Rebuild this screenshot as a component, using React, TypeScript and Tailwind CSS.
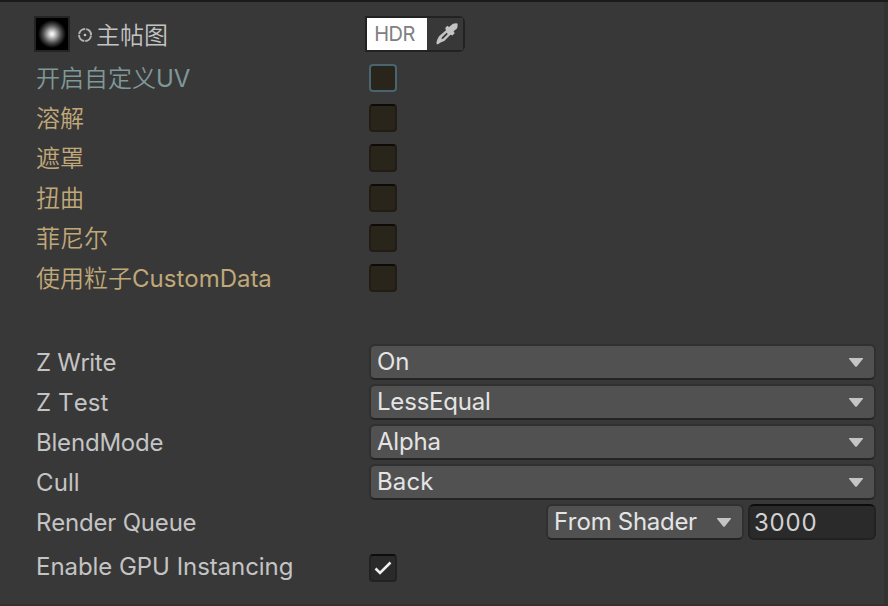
import type { ReactNode } from "react";

type Tone = "plain" | "override" | "gold";

const toneClass: Record<Tone, string> = {
  plain: "text-[#c4c4c4]",
  override: "text-[#7f9999] [font-weight:350]",
  gold: "text-[#c0a878] [font-weight:350]",
};

function Row({ label, tone = "plain", spacing = "", children }: { label: ReactNode; tone?: Tone; spacing?: string; children: ReactNode }) {
  return (
    <div className="flex h-10 items-center">
      <div className={`w-[333px] shrink-0 pt-[2px] ${toneClass[tone]} ${spacing}`}>{label}</div>
      {children}
    </div>
  );
}

function Toggle({ active = false }: { active?: boolean }) {
  return (
    <div
      className={`size-7 rounded-[4px] border-2 bg-[#2a251b] ${
        active ? "border-[#46656e]" : "border-[#211d16] border-t-[#0e0c08]"
      }`}
    />
  );
}

function Arrow() {
  return (
    <svg className="h-[9px] w-[14px]" viewBox="0 0 14 9" fill="#c4c4c4">
      <path d="M0 0H14V.8L8 8.2Q7 9.2 6 8.2L0 .8Z" />
    </svg>
  );
}

function Dropdown({ value, width = "w-[507px]", spacing = "" }: { value: string; width?: string; spacing?: string }) {
  return (
    <div
      className={`flex h-9 items-center justify-between rounded-[6px] border-2 border-[#303030] border-b-[#242424] bg-[#515151] pr-[11px] pl-[6px] text-[#e4e4e4] ${width}`}
    >
      <span className={spacing}>{value}</span>
      <Arrow />
    </div>
  );
}

function Eyedropper() {
  return (
    <svg className="h-[22px] w-[22px]" viewBox="0 0 22 22">
      <path
        fill="#c4c4c4"
        fillRule="evenodd"
        d="M14.200 3L17 .7Q19.500 0 21.500 .4Q22 3 21 5.500L17.600 8.300L18.700 10.300L16.300 12.500L14.400 11.800L8.300 17.900L4.600 19.400L1.600 21.500L.3 20.300L1.200 16.800L3 13.200L10 7.200L9.200 5L11.300 2.800L13 4ZM10.600 9.700L6 14.200L5.400 16.300L7.400 15.500L11.800 11.100Z"
      />
    </svg>
  );
}

const features: { label: string; latin?: string; tone: Tone; active?: boolean }[] = [
  { label: "开启自定义", latin: "UV", tone: "override", active: true },
  { label: "溶解", tone: "gold" },
  { label: "遮罩", tone: "gold" },
  { label: "扭曲", tone: "gold" },
  { label: "菲尼尔", tone: "gold" },
  { label: "使用粒子", latin: "CustomData", tone: "gold" },
];

const states = [
  { label: "Z Write", value: "On", labelSpacing: "tracking-[-0.3px]", valueSpacing: "" },
  { label: "Z Test", value: "LessEqual", labelSpacing: "tracking-[0.1px]", valueSpacing: "tracking-[-0.2px]" },
  { label: "BlendMode", value: "Alpha", labelSpacing: "tracking-[-0.2px]", valueSpacing: "tracking-[-0.2px]" },
  { label: "Cull", value: "Back", labelSpacing: "tracking-[0.1px]", valueSpacing: "tracking-[0.1px]" },
];

export default function App() {
  return (
    <div className="flex h-[606px] w-[888px] flex-col overflow-hidden border-t-2 border-b-2 border-t-[#1b1b1b] border-b-[#352f31] bg-[#383838] font-['Inter','Noto_Sans_CJK_SC',sans-serif] text-[24px] leading-[30px] [font-kerning:none] [font-weight:385] whitespace-nowrap">
      <div className="flex flex-1">
        <main className="w-[884px] pt-3 pl-9">
          <div className="flex h-10 items-center">
            <div className="-ml-[2px] flex w-[331px] items-center text-[#c4c4c4]">
              <div className="size-9 shrink-0 border-2 border-[#242424] bg-[radial-gradient(circle_at_50%_50%,#fff_0%,#ddd_10%,#999_24%,#555_38%,#202020_52%,#000_62%)] bg-black" />
              <svg className="ml-2 h-4 w-4 shrink-0" viewBox="0 0 16 16" fill="none" stroke="#b4b4b4">
                <circle cx="7" cy="9" r="6" strokeWidth="2" strokeDasharray="8.425 1" strokeDashoffset="-0.5" />
                <circle cx="7" cy="9" r="1.300" fill="#c4c4c4" stroke="none" />
              </svg>
              <span className="ml-[2px] pt-1 [font-weight:350]">主帖图</span>
            </div>
            <div className="flex h-9 w-[100px] rounded-r-[6px] border-2 border-[#222]">
              <div className="flex w-[60px] items-center justify-center bg-white pr-[5px] text-[20px] tracking-[-0.5px] text-[#808080]">HDR</div>
              <div className="flex flex-1 items-center justify-center bg-[#383838] pl-1">
                <Eyedropper />
              </div>
            </div>
          </div>

          <div className="mt-1">
            {features.map((f) => (
              <Row
                key={f.label}
                label={
                  <>
                    {f.label}
                    {f.latin && <span className="[font-weight:385]">{f.latin}</span>}
                  </>
                }
                tone={f.tone}
              >
                <Toggle active={f.active} />
              </Row>
            ))}
          </div>

          <div className="mt-11">
            {states.map((s) => (
              <Row key={s.label} label={s.label} spacing={s.labelSpacing}>
                <Dropdown value={s.value} spacing={s.valueSpacing} />
              </Row>
            ))}
            <Row label="Render Queue" spacing="tracking-[-0.2px]">
              <div className="ml-[177px] flex gap-1">
                <Dropdown value="From Shader" width="w-[198px]" spacing="tracking-[-0.3px]" />
                <div className="flex h-9 w-32 items-center rounded-[6px] border-2 border-[#222] border-t-[#0d0d0d] bg-[#2a2a2a] pt-[2px] pl-1 tracking-[0.8px] text-[#d2d2d2]">
                  3000
                </div>
              </div>
            </Row>
          </div>

          <div className="mt-[6px]">
            <Row label={<span className="relative -top-[2px]">Enable GPU Instancing</span>} spacing="tracking-[-0.05px]">
              <div className="flex size-7 items-center justify-center rounded-[4px] border-2 border-[#222] border-t-[#0d0d0d] bg-[#2a2a2a]">
                <svg className="size-[18px]" viewBox="0 0 18 18" fill="none" stroke="#eee" strokeWidth="2.600">
                  <path d="M1.500 9.500L6 14L16.500 3.500" />
                </svg>
              </div>
            </Row>
          </div>
        </main>
        <div className="w-1 bg-[#323232]" />
      </div>
    </div>
  );
}
